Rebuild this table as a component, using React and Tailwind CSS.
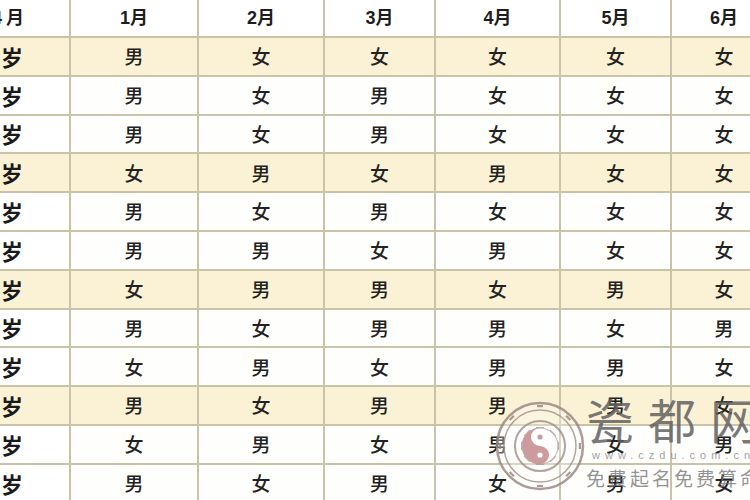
import React from 'react';

const months = ['1月', '2月', '3月', '4月', '5月', '6月'];

// 男 / 女 per row, months 1-6
const rows = [
    ['男', '女', '女', '女', '女', '女'],
    ['男', '女', '男', '女', '女', '女'],
    ['男', '女', '男', '女', '女', '女'],
    ['女', '男', '女', '男', '女', '女'],
    ['男', '女', '男', '女', '女', '女'],
    ['男', '男', '女', '男', '女', '女'],
    ['女', '男', '男', '女', '男', '女'],
    ['男', '女', '男', '男', '女', '男'],
    ['女', '男', '女', '男', '男', '女'],
    ['男', '女', '男', '男', '男', '女'],
    ['女', '男', '女', '男', '女', '男'],
    ['男', '女', '男', '女', '男', '女'],
];

const cjk = { fontFamily: '"Noto Sans CJK SC", "Noto Sans", sans-serif' };
const head = { fontFamily: '"Liberation Sans", "Noto Sans CJK SC", sans-serif' };

function Logo() {
    const marks = Array.from({ length: 8 }, (_, i) => i * 45);
    return (
        <svg width="92" height="92" viewBox="0 0 92 92" className="opacity-85 shrink-0">
            <circle cx="46" cy="46" r="43" fill="rgba(255,255,255,0.35)" stroke="#9e8b86" strokeWidth="2.5" />
            <circle cx="46" cy="46" r="36" fill="none" stroke="#a6948f" strokeWidth="1.5" />
            <circle cx="46" cy="46" r="25" fill="none" stroke="#a6948f" strokeWidth="2" />
            {marks.map(a => (
                <g key={a} transform={`rotate(${a} 46 46)`}>
                    <rect x="43" y="5" width="6" height="2.2" fill="#9c8a86" />
                    <rect x="42" y="27" width="8" height="1.6" fill="#b09f9b" />
                    <rect x="42" y="30" width="8" height="1.6" fill="#b09f9b" />
                </g>
            ))}
            <circle cx="46" cy="46" r="18" fill="#fff" stroke="#b9a3a2" strokeWidth="1" />
            <path d="M46 28 A18 18 0 0 0 46 64 A9 9 0 0 0 46 46 A9 9 0 0 1 46 28 Z" fill="#c48a8d" />
            <circle cx="46" cy="37" r="2.6" fill="#c48a8d" />
            <circle cx="46" cy="55" r="2.6" fill="#fff" />
        </svg>
    );
}

export default function App() {
    return (
        <div className="relative w-[750px] h-[500px] overflow-hidden bg-white">
            <div className="grid grid-cols-[69px_126px_124px_109px_123px_109px_104px] grid-rows-[36px_repeat(12,36.8px)] gap-[2px] bg-[#c9c4a8] w-max">
                <div style={head} className="bg-white flex items-center justify-end pr-[45px] text-[18px] font-bold text-[#1e1e1e] whitespace-nowrap">
                    <span className="mr-[4px]">4</span>月
                </div>
                {months.map(m => (
                    <div key={m} style={head} className="bg-white flex items-center justify-center text-[18px] font-bold text-[#1e1e1e]">
                        {m}
                    </div>
                ))}
                {rows.map((r, i) => {
                    const hi = i % 3 === 0;
                    return (
                        <React.Fragment key={i}>
                            <div
                                style={cjk}
                                className={`${hi ? 'bg-[#fbf1d4]' : 'bg-white'} flex items-center justify-end pr-[46px] text-[22px] font-bold text-[#1a1a1a] whitespace-nowrap`}
                            >
                                <span className="mr-[8px]">{18 + i}</span>岁
                            </div>
                            {r.map((g, j) => (
                                <div
                                    key={j}
                                    style={cjk}
                                    className={`${hi ? 'bg-[#fbf1d4]' : 'bg-[#fefefc]'} flex items-center justify-center text-[19px] font-medium text-[#222]`}
                                >
                                    {g}
                                </div>
                            ))}
                        </React.Fragment>
                    );
                })}
            </div>

            {/* watermark over the table */}
            <div className="absolute left-[494px] top-[394px] flex items-start pointer-events-none">
                <div className="mt-[6px]">
                    <Logo />
                </div>
                <div className="flex flex-col">
                    <div style={cjk} className="text-[48px] leading-none font-normal tracking-[14px] text-[#616161]/85 whitespace-nowrap">
                        瓷都网
                    </div>
                    <div style={head} className="mt-[8px] ml-[6px] text-[11px] leading-none tracking-[5px] text-[#888]/80 whitespace-nowrap">
                        www.czdu.com.cn
                    </div>
                    <div style={cjk} className="mt-[7px] text-[19px] leading-none tracking-[3px] text-[#707070]/75 whitespace-nowrap">
                        免费起名免费算命
                    </div>
                </div>
            </div>
        </div>
    );
}
